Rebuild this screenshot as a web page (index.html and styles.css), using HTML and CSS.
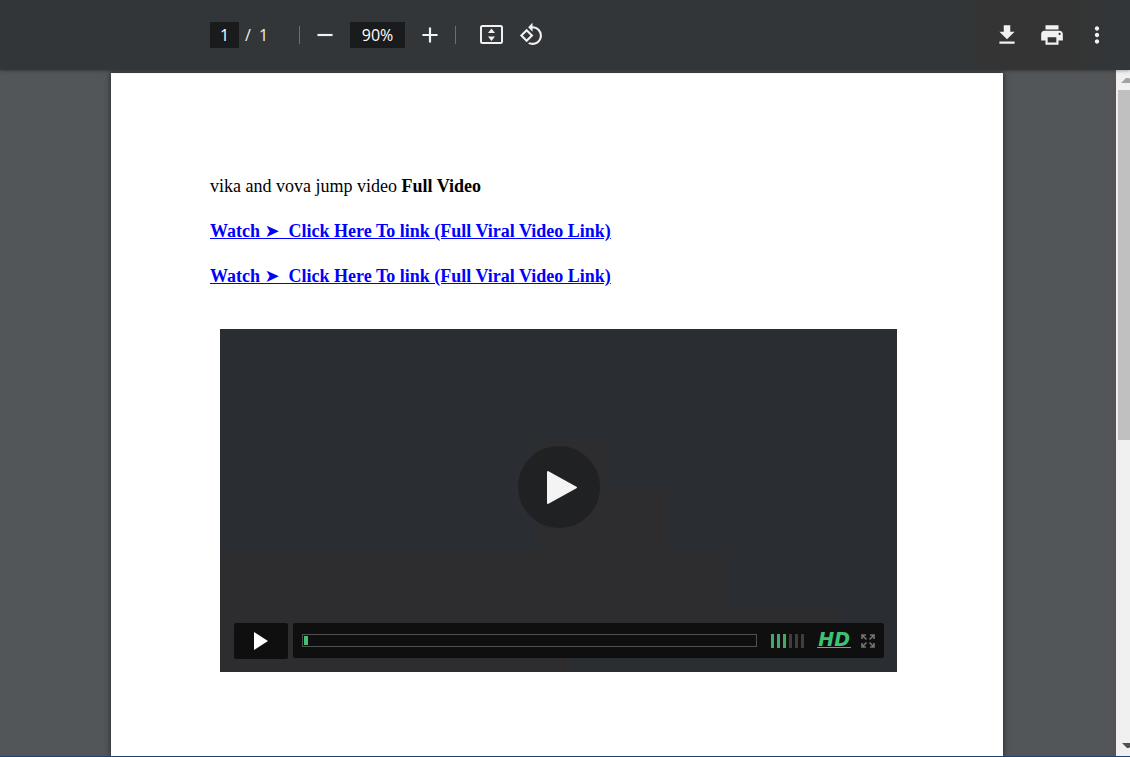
FILE: index.html
```html
<!DOCTYPE html>
<html lang="en">
<head>
<meta charset="utf-8">
<title>PDF viewer</title>
<link rel="stylesheet" href="styles.css">
</head>
<body>
<header class="toolbar">
  <div class="pages">
    <input class="field field-page" type="text" value="1" aria-label="Page number">
    <span class="slash">/</span>
    <span>1</span>
  </div>
  <span class="divider"></span>
  <div class="zoom">
    <button class="tool" aria-label="Zoom out"><svg width="26" height="26" viewBox="0 0 24 24"><path d="M5 11h14v2H5z"/></svg></button>
    <input class="field field-zoom" type="text" value="90%" aria-label="Zoom level">
    <button class="tool" aria-label="Zoom in"><svg width="26" height="26" viewBox="0 0 24 24"><path d="M19 13h-6v6h-2v-6H5v-2h6V5h2v6h6z"/></svg></button>
  </div>
  <span class="divider"></span>
  <div class="fit">
    <button class="tool" aria-label="Fit to page"><svg width="26" height="26" viewBox="0 0 26 26"><rect x="3" y="4" width="21" height="17" rx="1.500" fill="none" stroke="#f1f1f1" stroke-width="2"/><path d="M13.500 6.500l3.500 4.500h-7zM13.500 19l3.500-4.500h-7z"/></svg></button>
    <button class="tool" aria-label="Rotate counterclockwise"><svg width="25" height="25" viewBox="0 0 24 24"><path d="M7.34 6.41L.86 12.9l6.49 6.48 6.49-6.48-6.5-6.49zM3.69 12.9l3.66-3.66L11 12.9l-3.66 3.66-3.65-3.66zm15.67-6.26C17.61 4.88 15.3 4 13 4V.76L8.76 5 13 9.24V6c1.79 0 3.58.68 4.95 2.05 2.73 2.73 2.73 7.17 0 9.9C16.58 19.32 14.79 20 13 20c-.97 0-1.94-.21-2.84-.61l-1.49 1.49C10.02 21.62 11.51 22 13 22c2.3 0 4.61-.88 6.36-2.64 3.52-3.51 3.52-9.21 0-12.72z"/></svg></button>
  </div>
  <div class="actions">
    <button class="tool" aria-label="Download"><svg width="26" height="26" viewBox="0 0 24 24"><path d="M19 9h-4V3H9v6H5l7 7 7-7zM5 18v2h14v-2H5z"/></svg></button>
    <button class="tool" aria-label="Print"><svg width="26" height="26" viewBox="0 0 24 24"><path d="M19 8H5c-1.66 0-3 1.34-3 3v6h4v4h12v-4h4v-6c0-1.66-1.34-3-3-3zm-3 11H8v-5h8v5zm3-7c-.55 0-1-.45-1-1s.45-1 1-1 1 .45 1 1-.45 1-1 1zm-1-9H6v4h12V3z"/></svg></button>
    <button class="tool" aria-label="More actions"><svg width="26" height="26" viewBox="0 0 24 24"><path d="M12 8c1.100 0 2-.9 2-2s-.9-2-2-2-2 .9-2 2 .9 2 2 2zm0 2c-1.100 0-2 .9-2 2s.9 2 2 2 2-.9 2-2-.9-2-2-2zm0 6c-1.100 0-2 .9-2 2s.9 2 2 2 2-.9 2-2-.9-2-2-2z"/></svg></button>
  </div>
</header>
<div class="viewer">
  <main class="canvas">
    <article class="sheet">
      <p class="line">vika and vova jump video <b>Full Video</b></p>
      <p class="line"><a class="link" href="#">Watch ➤&nbsp; Click Here To link (Full Viral Video Link)</a></p>
      <p class="line"><a class="link" href="#">Watch ➤&nbsp; Click Here To link (Full Viral Video Link)</a></p>
      <section class="video">
        <div class="stage">
          <button class="big-play" aria-label="Play video"><svg width="82" height="82" viewBox="0 0 82 82"><path d="M30 26v31l28-15.500z" fill="#f4f4f4" stroke="#f4f4f4" stroke-width="2" stroke-linejoin="round"/></svg></button>
        </div>
        <div class="controls">
          <button class="play" aria-label="Play"><svg width="14" height="18" viewBox="0 0 14 18"><path d="M0 0v18l14-9z" fill="#fff"/></svg></button>
          <div class="bar">
            <div class="track"><span class="played"></span></div>
            <div class="volume"><i class="on"></i><i class="on"></i><i class="on"></i><i></i><i></i><i></i></div>
            <span class="hd">HD</span>
            <button class="full" aria-label="Full screen"><svg width="14" height="14" viewBox="0 0 14 14"><path d="M1 5V1h4M1 1l4.500 4.500M9 1h4v4M13 1L8.500 5.500M1 9v4h4M1 13l4.500-4.500M13 9v4H9M13 13L8.500 8.500" fill="none" stroke="#747474" stroke-width="1.600"/></svg></button>
          </div>
        </div>
      </section>
    </article>
  </main>
  <div class="scroll">
    <svg class="arrow" width="12" height="20" viewBox="0 0 12 20"><path d="M3 13h9V9l-1-1h-3z" fill="#a3a3a3"/></svg>
    <div class="thumb"></div>
    <svg class="arrow arrow-down" width="12" height="20" viewBox="0 0 12 20"><path d="M4 7h8v4l-1 1h-2z" fill="#505050"/></svg>
  </div>
</div>
<footer class="edge"></footer>
</body>
</html>
```
FILE: styles.css
```css
* { box-sizing: border-box; }
body {
  margin: 0;
  height: 100vh;
  display: flex;
  flex-direction: column;
  overflow: hidden;
  background: #525659;
  font-family: "Open Sans", sans-serif;
}
button { border: 0; padding: 0; background: none; display: grid; place-items: center; }
svg { display: block; }

.toolbar {
  flex: none;
  height: 70px;
  padding: 0 20px 1px 210px;
  display: flex;
  align-items: center;
  background: linear-gradient(90deg, #323639 85%, #343434 87%, #343434 95%, #323639 98%);
  color: #f1f1f1;
  font-size: 16px;
  box-shadow: 0 0 4px rgba(0, 0, 0, .5);
  position: relative;
  z-index: 1;
}
.pages { display: flex; align-items: center; gap: 8px; width: 89px; }
.slash { margin-left: -2px; }
.field {
  height: 26px;
  border: 0;
  padding: 0;
  background: #191b1c;
  color: #fff;
  font: inherit;
  text-align: center;
}
.field-page { width: 29px; }
.field-zoom { width: 55px; }
.divider { width: 1px; height: 18px; background: #6d7072; }
.zoom { display: flex; align-items: center; gap: 12px; margin: 0 12px; }
.fit { display: flex; align-items: center; gap: 14px; margin-left: 22px; }
.tool { width: 26px; height: 26px; }
.tool svg { fill: #f1f1f1; }
.actions { display: flex; gap: 19px; margin-left: auto; }

.viewer { flex: 1; min-height: 0; display: flex; }
.canvas {
  flex: 1;
  padding: 3px 113px 0 111px;
  display: flex;
  overflow: hidden;
  background: linear-gradient(90deg, #525659 99%, #565352 100%);
}
.sheet {
  flex: 1;
  padding: 102px 106px 0 99px;
  background: #fff;
  box-shadow: 0 0 6px rgba(0, 0, 0, .6);
  font-family: "Liberation Serif", "DejaVu Sans", serif;
  font-size: 18px;
  line-height: 22px;
  color: #000;
}
.line { margin: 0 0 23px; }
.link { color: #00f; font-weight: bold; }

.video {
  margin: 42px 0 0 10px;
  padding: 14px 13px 13px 14px;
  background: #2a2d32;
  position: relative;
}
.video::before {
  content: "";
  position: absolute;
  inset: 0;
  background: #2d2c2e;
  clip-path: polygon(0 65%, 47% 65%, 47% 33%, 57% 33%, 57% 47%, 66% 47%, 66% 65%, 75% 65%, 75% 82%, 91% 82%, 91% 88%, 52% 88%, 52% 100%, 0 100%);
}
.stage { height: 280px; display: grid; place-items: center; padding-top: 8px; position: relative; }
.big-play { width: 82px; height: 82px; border-radius: 50%; background: #202123; }
.controls { display: flex; gap: 5px; align-items: flex-start; position: relative; }
.play { width: 54px; height: 36px; border-radius: 2px; background: #0f0f10; }
.bar {
  flex: 1;
  height: 35px;
  padding: 0 9px;
  display: flex;
  align-items: center;
  border-radius: 2px;
  background: #0f0f10;
}
.track { flex: 1; height: 13px; padding: 1px; border: 1px solid #505050; display: flex; }
.played { width: 4px; background: #45bd74; }
.volume { display: flex; gap: 3px; margin: 0 13px 0 14px; }
.volume i { width: 3px; height: 14px; background: #3c3f3e; }
.volume .on { background: #43a96b; }
.hd {
  font: italic bold 19px/13px "DejaVu Sans", sans-serif;
  color: #3cc474;
  border-bottom: 1px solid #3cc474;
  padding: 0 1px 1px;
}
.full { width: 14px; height: 14px; margin-left: 10px; }

.scroll { width: 14px; padding-left: 2px; background: #f0f0f0; display: flex; flex-direction: column; }
.arrow { flex: none; }
.arrow-down { margin-top: auto; }
.thumb { height: 51%; background: #c0c0c0; }
.edge { flex: none; height: 1px; background: #24426f; }
```
